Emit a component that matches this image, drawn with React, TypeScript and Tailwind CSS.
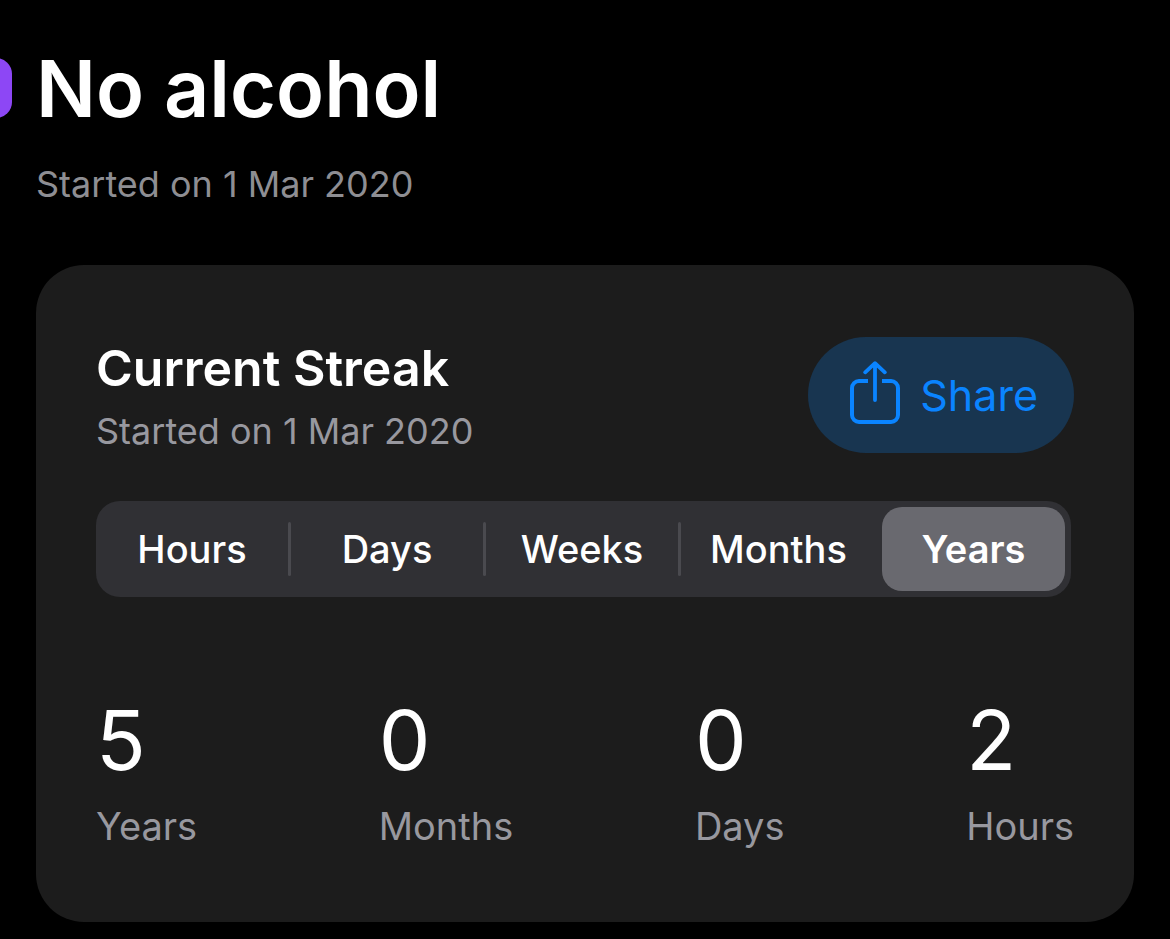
import { useState } from "react";

const units = ["Hours", "Days", "Weeks", "Months", "Years"];
const stats = [
  { value: 5, label: "Years" },
  { value: 0, label: "Months" },
  { value: 0, label: "Days" },
  { value: 2, label: "Hours" },
];

function ShareIcon() {
  return (
    <svg width="50" height="68" viewBox="0 0 50 68" fill="none" stroke="currentColor" strokeWidth="4" aria-hidden="true">
      <path d="M18 20H9a7 7 0 0 0-7 7v27a7 7 0 0 0 7 7h32a7 7 0 0 0 7-7V27a7 7 0 0 0-7-7h-9" />
      <path d="M25 39V3M15.2 11.3 25 2.2l9.8 9.1" strokeWidth="3.8" strokeLinecap="round" strokeLinejoin="round" />
    </svg>
  );
}

export default function App() {
  const [unit, setUnit] = useState("Years");
  const selected = units.indexOf(unit);
  return (
    <main className="min-h-screen overflow-x-hidden bg-black pb-4 font-['Inter',sans-serif] text-white">
      <header className="flex items-start gap-6">
        <div className="mt-[58px] -ml-12 size-[60px] shrink-0 rounded-2xl bg-[#8d47f5]" />
        <div className="pt-9">
          <h1 className="text-[79px] leading-[104px] font-semibold">No alcohol</h1>
          <p className="mt-5 text-[36px] leading-[48px] text-[#8e8e93]">Started on 1 Mar 2020</p>
        </div>
      </header>
      <section className="mx-9 mt-[57px] rounded-[48px] bg-[#1c1c1c] px-[60px] pt-[72px] pb-[59px]">
        <div className="flex items-start justify-between">
          <div>
            <h2 className="text-[50px] leading-[62px] font-semibold">Current Streak</h2>
            <p className="text-[36px] leading-[64px] text-[#98989f]">Started on 1 Mar 2020</p>
          </div>
          <button className="flex h-[116px] items-center gap-5 rounded-full bg-[#183550] pr-9 pl-[42px] text-[43px] text-[#0a84ff]">
            <ShareIcon />
            Share
          </button>
        </div>
        <div className="mt-[38px] mr-[3px] grid h-24 grid-cols-5 rounded-3xl bg-[#303034]">
          {units.map((name, i) => (
            <div key={name} className="flex items-center">
              <button
                aria-pressed={unit === name}
                onClick={() => setUnit(name)}
                className={
                  unit === name
                    ? "mx-[6px] h-[84px] flex-1 rounded-[20px] bg-[#69696f] text-[38px] font-semibold"
                    : "h-[84px] flex-1 text-[38px] font-medium"
                }
              >
                {name}
              </button>
              {i < units.length - 1 && i !== selected && i !== selected - 1 && (
                <span className="h-[54px] w-[3px] rounded-full bg-[#4a4a4f]" />
              )}
            </div>
          ))}
        </div>
        <dl className="mt-[96px] flex justify-between">
          {stats.map((s) => (
            <div key={s.label} className="flex flex-col-reverse">
              <dt className="text-[38px] leading-[74px] text-[#98989f]">{s.label}</dt>
              <dd className="text-[82px] leading-[96px]">{s.value}</dd>
            </div>
          ))}
        </dl>
      </section>
    </main>
  );
}
